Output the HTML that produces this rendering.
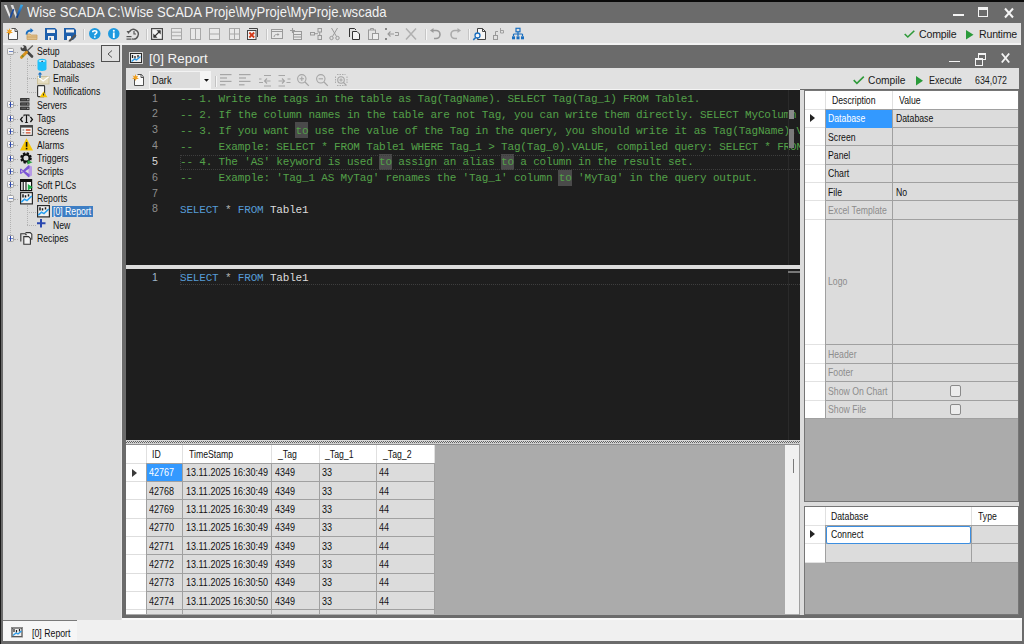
<!DOCTYPE html>
<html><head><meta charset="utf-8"><style>
*{margin:0;padding:0;box-sizing:border-box}
html,body{width:1024px;height:644px;overflow:hidden}
body{position:relative;background:#6b6b6b;font-family:"Liberation Sans",sans-serif;font-size:10px;color:#000}
.a{position:absolute}
.t{position:absolute;white-space:nowrap;line-height:1}
svg{position:absolute;overflow:visible}
.sep{position:absolute;top:29px;width:2px;height:11px;border-left:1px solid #c6c6c6;border-right:1px solid #f6f6f6}
.mono{font-family:"Liberation Mono",monospace;white-space:pre}
</style></head><body>
<div class="a" style="left:0px;top:0px;width:1024px;height:2px;background:#0a0a0a"></div>
<div class="a" style="left:0px;top:0px;width:1px;height:644px;background:#1a1a1a"></div>
<div class="a" style="left:3px;top:23px;width:1018px;height:20px;background:#e1e1e1"></div>
<div class="a" style="left:3px;top:42.5px;width:1018px;height:2px;background:#f2f2f2"></div>
<div class="a" style="left:3px;top:44.5px;width:118.5px;height:575.5px;background:#dcdcdc"></div>
<div class="a" style="left:121px;top:44.5px;width:1px;height:575.5px;background:#e6e6e6"></div>
<div class="a" style="left:126px;top:67.9px;width:893px;height:21.1px;background:#e1e1e1"></div>
<div class="a" style="left:126px;top:89px;width:674px;height:1.4px;background:#f4f4f4"></div>
<div class="a" style="left:126px;top:90px;width:674px;height:175px;background:#1e1e1e"></div>
<div class="a" style="left:126px;top:265px;width:674px;height:4px;background:#dcdcdc"></div>
<div class="a" style="left:126px;top:269px;width:674px;height:171px;background:#1e1e1e"></div>
<div class="a" style="left:126px;top:440px;width:674px;height:4px;background:#c8c8c8"></div>
<div class="a" style="left:126px;top:444px;width:674px;height:171px;background:#ababab"></div>
<div class="a" style="left:800px;top:90px;width:5px;height:525px;background:#dcdcdc"></div>
<div class="a" style="left:805px;top:91px;width:214px;height:411px;background:#ababab"></div>
<div class="a" style="left:805px;top:502px;width:214px;height:4px;background:#dcdcdc"></div>
<div class="a" style="left:805px;top:506px;width:214px;height:109px;background:#ababab"></div>
<div class="a" style="left:3px;top:620px;width:1018px;height:21.3px;background:#f0f0f0"></div>
<svg style="left:0px;top:0px" width="26" height="22" viewBox="0 0 26 22"><defs><linearGradient id="lg" x1="0" y1="1" x2="0" y2="0"><stop offset="0" stop-color="#10306e"/><stop offset="0.5" stop-color="#1e6cc0"/><stop offset="1" stop-color="#3ab0f0"/></linearGradient></defs><path d="M4 5 L6.6 5 L11.2 17.6 L9.6 18.2 Z" fill="#e6e6e6"/><path d="M10.6 5 L13.2 5 L17.6 17.6 L16 18.2 Z" fill="#dedede"/><path d="M9.4 17.6 L11 18.3 L14.4 9.6 L12.8 8.8 Z" fill="#1a4a9c"/><path d="M15.8 17.6 L17.5 18.3 L23.2 5 L20.6 4.6 Z" fill="url(#lg)"/></svg>
<div class="t" style="left:26.50px;top:5.28px;font-size:14.5px;color:#f2f2f2;transform:scaleX(0.9013);transform-origin:0 0;">Wise SCADA C:\Wise SCADA Proje\MyProje\MyProje.wscada</div>
<div class="a" style="left:952.6px;top:14px;width:11px;height:1.7px;background:#f4f4f4"></div>
<div class="a" style="left:978px;top:6.6px;width:10.2px;height:10.2px;border:1.6px solid #f4f4f4;border-top-width:3px"></div>
<svg style="left:1003.5px;top:7.5px" width="10" height="10" viewBox="0 0 10 10"><path d="M1 0.5 L9 9.5 M9 0.5 L1 9.5" stroke="#f4f4f4" stroke-width="2"/></svg>
<svg style="left:6px;top:28px" width="13" height="12" viewBox="0 0 13 12"><path d="M2.5 4.5 V11.5 H11.5 V3 L9.5 0.5 H5.5" fill="#fafafa" stroke="#505050" stroke-width="1"/><path d="M9 0.5 V3.5 H11.5" fill="none" stroke="#505050" stroke-width="1"/><path d="M3.5 0 L4.2 2.3 L6.5 1.5 L5 3.5 L7 5 L4.5 5 L3.5 7 L2.7 5 L0 5 L2 3.5 L0.5 1.5 L2.8 2.3Z" fill="#f0a020"/></svg>
<svg style="left:25px;top:28px" width="13" height="12" viewBox="0 0 13 12"><path d="M2 6 H5 L6 7 H12 V11.5 H2 Z" fill="#dfc08a" stroke="#c9a060" stroke-width="0.8"/><path d="M2 9 h10" stroke="#c9a060" stroke-width="0.8"/><path d="M1.5 6.5 C1.5 3 3.5 2.5 6 2.5" fill="none" stroke="#1a6fc0" stroke-width="1.8"/><path d="M5.5 0 L8.5 2.5 L5.5 5 Z" fill="#1a6fc0"/></svg>
<svg style="left:45px;top:28px" width="12" height="12" viewBox="0 0 12 12"><path d="M0 0 H10 L12 2 V12 H0 Z" fill="#1d5fac"/><rect x="2" y="1.5" width="8" height="3.5" fill="#f0f0f0"/><rect x="3" y="8" width="6" height="4" fill="#f0f0f0"/><rect x="4.5" y="9.5" width="1.5" height="2.5" fill="#1d5fac"/></svg>
<svg style="left:64px;top:28px" width="12" height="12" viewBox="0 0 12 12"><path d="M0 0 H10 L12 2 V9 L9 12 H0 Z" fill="#1d5fac"/><rect x="2" y="1.5" width="8" height="3" fill="#f0f0f0"/><rect x="3" y="8" width="4" height="4" fill="#f0f0f0"/><path d="M5 12 L11 6 L12.5 7.5 L6.5 13.5 L4.5 13.5Z" fill="#555"/></svg>
<div class="sep" style="left:83px"></div>
<svg style="left:88.5px;top:28px" width="11.5" height="11.5" viewBox="0 0 11.5 11.5"><circle cx="5.75" cy="5.75" r="5.75" fill="#1e9ae0"/><path d="M3.7 4.2 C3.7 2.2 7.8 2.2 7.8 4.2 C7.8 5.7 5.8 5.6 5.8 7.2" fill="none" stroke="#fff" stroke-width="1.6"/><circle cx="5.8" cy="9.1" r="0.9" fill="#fff"/></svg>
<svg style="left:107.5px;top:28px" width="11.5" height="11.5" viewBox="0 0 11.5 11.5"><circle cx="5.75" cy="5.75" r="5.75" fill="#1e9ae0"/><rect x="4.9" y="4.5" width="1.8" height="5.5" fill="#fff"/><circle cx="5.8" cy="2.8" r="1" fill="#fff"/></svg>
<svg style="left:126px;top:28px" width="13" height="12" viewBox="0 0 13 12"><path d="M3.5 3.5 A4.8 4.8 0 1 1 6 10.8" fill="none" stroke="#555" stroke-width="1.4"/><path d="M0.5 3 L4.5 3 L2.5 6 Z" fill="#555"/><path d="M8 3 V6 H10" fill="none" stroke="#555" stroke-width="1.2"/><rect x="0.5" y="8" width="5" height="1.2" fill="#555"/><rect x="0.5" y="10.5" width="5" height="1.2" fill="#555"/></svg>
<div class="sep" style="left:146px"></div>
<svg style="left:151px;top:28px" width="12" height="12" viewBox="0 0 12 12"><rect x="0.6" y="0.6" width="10.8" height="10.8" fill="#f4f4f4" stroke="#4a4a4a" stroke-width="1.2"/><path d="M3 9 L9 3" stroke="#333" stroke-width="1.1"/><path d="M5.5 2.3 H9.7 V6.5 Z" fill="#333"/><path d="M2.3 5.5 V9.7 H6.5 Z" fill="#333"/></svg>
<svg style="left:171px;top:28px" width="11" height="12" viewBox="0 0 11 12"><rect x="0.5" y="0.5" width="10" height="11" fill="#e8e8e8" stroke="#a8a8a8"/><path d="M0.5 4.2 H10.5 M0.5 7.8 H10.5" stroke="#a8a8a8"/></svg>
<svg style="left:190px;top:28px" width="11" height="12" viewBox="0 0 11 12"><rect x="0.5" y="0.5" width="10" height="11" fill="#e8e8e8" stroke="#a8a8a8"/><path d="M5.5 0.5 V11.5" stroke="#a8a8a8"/></svg>
<svg style="left:209px;top:28px" width="11" height="12" viewBox="0 0 11 12"><rect x="0.5" y="0.5" width="10" height="11" fill="#e8e8e8" stroke="#a8a8a8"/><path d="M0.5 6 H10.5" stroke="#a8a8a8"/></svg>
<svg style="left:228.5px;top:28px" width="11" height="12" viewBox="0 0 11 12"><rect x="0.5" y="0.5" width="10" height="11" fill="#e8e8e8" stroke="#a8a8a8"/><path d="M0.5 6 H10.5 M5.5 0.5 V11.5" stroke="#a8a8a8"/></svg>
<svg style="left:246.5px;top:28px" width="11" height="12" viewBox="0 0 11 12"><path d="M2 0.5 H10.5 V9" fill="none" stroke="#444" stroke-width="1"/><rect x="0.5" y="2.5" width="8.5" height="9" fill="#f4f4f4" stroke="#444" stroke-width="1"/><path d="M2.3 4.5 L7.2 9.5 M7.2 4.5 L2.3 9.5" stroke="#d23a1a" stroke-width="1.8"/></svg>
<div class="sep" style="left:266px"></div>
<svg style="left:271px;top:28px" width="12" height="12" viewBox="0 0 12 12"><rect x="0.5" y="1.5" width="11" height="9" fill="#e6e6e6" stroke="#9a9a9a"/><path d="M0.5 3.5 H11.5" stroke="#9a9a9a"/><path d="M3 9 C3 6.5 5 6.5 7 6.5" fill="none" stroke="#9a9a9a"/><path d="M6.5 5 L8.5 6.5 L6.5 8Z" fill="#9a9a9a"/></svg>
<svg style="left:290px;top:28px" width="12" height="12" viewBox="0 0 12 12"><rect x="3.5" y="3.5" width="8" height="8" fill="#e6e6e6" stroke="#9a9a9a"/><path d="M3.5 6.5 H11.5 M3.5 9 H11.5" stroke="#9a9a9a"/><path d="M2.5 0 V5 M0 2.5 H5" stroke="#9a9a9a" stroke-width="1.1"/></svg>
<svg style="left:309.5px;top:28px" width="12" height="12" viewBox="0 0 12 12"><rect x="0.5" y="4.5" width="4" height="2.5" fill="none" stroke="#9a9a9a"/><rect x="8" y="0.5" width="3.5" height="3.5" fill="none" stroke="#9a9a9a"/><rect x="8" y="7.5" width="3.5" height="4" fill="none" stroke="#9a9a9a"/><path d="M4.5 5.7 H8 M9.7 4 V7.5" stroke="#9a9a9a"/></svg>
<svg style="left:329px;top:28px" width="11" height="12" viewBox="0 0 11 12"><path d="M2.5 0 L7.5 8.5 M8.5 0 L3.5 8.5" stroke="#9a9a9a" stroke-width="1"/><circle cx="2.5" cy="10" r="1.7" fill="none" stroke="#9a9a9a"/><circle cx="8.5" cy="10" r="1.7" fill="none" stroke="#9a9a9a"/></svg>
<svg style="left:349px;top:28px" width="11" height="12" viewBox="0 0 11 12"><path d="M0.5 9 V0.5 H5.5 L7 2" fill="none" stroke="#333" stroke-width="1"/><path d="M3.5 3.5 H8 L10.5 6 V11.5 H3.5 Z" fill="#f2f2f2" stroke="#333" stroke-width="1"/></svg>
<svg style="left:368px;top:28px" width="11" height="12" viewBox="0 0 11 12"><rect x="0.5" y="2" width="7" height="9.5" fill="#e4e4e4" stroke="#9a9a9a"/><path d="M2.5 2 V0.5 H5.5 V2" fill="none" stroke="#9a9a9a"/><rect x="4.5" y="5.5" width="6" height="6" fill="#eee" stroke="#9a9a9a"/></svg>
<svg style="left:385px;top:28px" width="14" height="12" viewBox="0 0 14 12"><rect x="0" y="0" width="2" height="2" fill="#888"/><rect x="0" y="10" width="2" height="2" fill="#888"/><path d="M3 6 H9 M5.5 3.5 L3 6 L5.5 8.5" fill="none" stroke="#9a9a9a" stroke-width="1.1"/><path d="M10 4.5 H13.5 V7.5 H10" fill="none" stroke="#9a9a9a"/></svg>
<svg style="left:405px;top:28px" width="12" height="12" viewBox="0 0 12 12"><path d="M1 11.5 L11 0.5 M1 0.5 L11 11.5" stroke="#b0b0b0" stroke-width="1.5"/></svg>
<div class="sep" style="left:425px"></div>
<svg style="left:430px;top:28px" width="11" height="12" viewBox="0 0 11 12"><path d="M2 2.5 H6 A4 4 0 0 1 6 10.5 H4" fill="none" stroke="#9a9a9a" stroke-width="1.6"/><path d="M0 2.5 L3.5 0 V5Z" fill="#9a9a9a"/></svg>
<svg style="left:449.5px;top:28px" width="11" height="12" viewBox="0 0 11 12"><path d="M9 2.5 H5 A4 4 0 0 0 5 10.5 H7" fill="none" stroke="#aaa" stroke-width="1.6"/><path d="M11 2.5 L7.5 0 V5Z" fill="#aaa"/></svg>
<div class="sep" style="left:468px"></div>
<svg style="left:473px;top:28px" width="13" height="12" viewBox="0 0 13 12"><path d="M4.5 0.5 H9.5 L12.5 3.5 V11.5 H4.5 Z" fill="#f6f6f6" stroke="#444" stroke-width="1"/><path d="M9.5 0.5 V3.5 H12.5" fill="none" stroke="#444"/><circle cx="4.5" cy="7.5" r="2.5" fill="#f6f6f6" stroke="#1a6fc0" stroke-width="1.3"/><path d="M2.7 9.5 L0.3 11.8" stroke="#1a6fc0" stroke-width="1.6"/></svg>
<svg style="left:493px;top:28px" width="11" height="12" viewBox="0 0 11 12"><rect x="0.5" y="7.5" width="4" height="4" fill="none" stroke="#9a9a9a"/><path d="M2.5 7.5 V3.5 H5" fill="none" stroke="#9a9a9a"/><path d="M7.5 0 V5 H10.5 V2.5 H7.5" fill="none" stroke="#9a9a9a" stroke-width="0.9"/></svg>
<svg style="left:512px;top:28px" width="12" height="12" viewBox="0 0 12 12"><rect x="4" y="0.3" width="4" height="3.5" fill="none" stroke="#1a6fc0" stroke-width="1.2"/><path d="M6 3.8 V6 M1.5 6 H10.5 M1.5 6 V8 M6 6 V8 M10.5 6 V8" fill="none" stroke="#1a6fc0" stroke-width="1.2"/><rect x="0" y="8.3" width="3" height="3" fill="#1a6fc0"/><rect x="4.5" y="8.3" width="3" height="3" fill="#1a6fc0"/><rect x="9" y="8.3" width="3" height="3" fill="#1a6fc0"/></svg>
<svg style="left:904px;top:30px" width="11" height="8" viewBox="0 0 11 8"><path d="M0.7 4 L3.8 7 L10.3 0.7" fill="none" stroke="#2f9a3a" stroke-width="1.6"/></svg>
<div class="t ui" style="left:919px;top:29px;font-size:10.6px;letter-spacing:-0.2px;color:#1a1a1a">Compile</div>
<svg style="left:966px;top:29.5px" width="7.5" height="9.5" viewBox="0 0 7.5 9.5"><path d="M0 0 L7.5 4.75 L0 9.5Z" fill="#2a9a3a"/></svg>
<div class="t ui" style="left:979px;top:29px;font-size:10.6px;letter-spacing:-0.2px;color:#1a1a1a">Runtime</div>
<div class="a" style="left:10px;top:55.7px;width:1px;height:179.0px;border-left:1px dotted #b2b2b2"></div>
<div class="a" style="left:26.5px;top:57.7px;width:1px;height:34.1px;border-left:1px dotted #b2b2b2"></div>
<div class="a" style="left:26.5px;top:204.7px;width:1px;height:20.7px;border-left:1px dotted #b2b2b2"></div>
<div class="a" style="left:14px;top:51.7px;width:4px;height:1px;border-top:1px dotted #b2b2b2"></div>
<div class="a" style="left:7px;top:47.5px;width:7px;height:7.5px;border:1px solid #a4a4a4;background:linear-gradient(#fdfdfd,#e8e8e8);border-radius:1.5px"></div>
<div class="a" style="left:8.5px;top:51px;width:4px;height:1px;background:#6f86c8"></div>
<svg style="left:19.5px;top:44.9px" width="14" height="13" viewBox="0 0 14 13"><path d="M5 4.5 L12 11.5" stroke="#454545" stroke-width="2.6" stroke-linecap="round"/><circle cx="3.6" cy="3.2" r="3" fill="#454545"/><path d="M0.3 1.2 L2.6 3.5 L4.2 1.9 L1.9 -0.4Z" fill="#dcdcdc"/><path d="M6.8 6.2 L12.8 0.6" stroke="#585858" stroke-width="1.3"/><path d="M1.5 12.3 L6.5 7.3" stroke="#d8921e" stroke-width="3" stroke-linecap="round"/><path d="M2 11.8 L3.3 10.5" stroke="#7a8a30" stroke-width="2.2"/></svg>
<div class="t" style="left:36.50px;top:47.10px;font-size:10px;color:#111;transform:scaleX(0.8680);transform-origin:0 0;">Setup</div>
<div class="a" style="left:27px;top:65.1px;width:9px;height:1px;border-top:1px dotted #b2b2b2"></div>
<svg style="left:36.5px;top:58.5px" width="13" height="13" viewBox="0 0 13 13"><path d="M0.5 1.8 C0.5 -0.9 9.5 -0.9 9.5 1.8 V10 C9.5 12.6 0.5 12.6 0.5 10 Z" fill="#1ec0fa"/><ellipse cx="5" cy="1.9" rx="3.4" ry="1" fill="#c8f0ff"/><ellipse cx="5.2" cy="2.3" rx="1" ry="0.5" fill="#0a3050"/></svg>
<div class="t" style="left:52.80px;top:60.46px;font-size:10px;color:#111;transform:scaleX(0.8680);transform-origin:0 0;">Databases</div>
<div class="a" style="left:27px;top:78.4px;width:9px;height:1px;border-top:1px dotted #b2b2b2"></div>
<svg style="left:36.5px;top:71.8px" width="13" height="13" viewBox="0 0 13 13"><rect x="0.5" y="4.5" width="11.5" height="7.5" fill="#e4dcc0" stroke="#c8bc90" stroke-width="0.8"/><path d="M0.8 4.8 L6.2 9 L11.7 4.8" fill="none" stroke="#fff" stroke-width="1.2"/><path d="M3 6 V1.5" stroke="#1a70c0" stroke-width="1.3"/><path d="M0.8 2.5 L3 0 L5.2 2.5Z" fill="#1a70c0"/></svg>
<div class="t" style="left:52.80px;top:73.82px;font-size:10px;color:#111;transform:scaleX(0.8680);transform-origin:0 0;">Emails</div>
<div class="a" style="left:27px;top:91.8px;width:9px;height:1px;border-top:1px dotted #b2b2b2"></div>
<svg style="left:36.5px;top:85.2px" width="13" height="13" viewBox="0 0 13 13"><rect x="0.6" y="0.6" width="7" height="11" rx="0.8" fill="#f4f4f4" stroke="#333" stroke-width="1.1"/><path d="M6.5 6.5 L10.5 12.3 H2.5 Z" fill="#f5c400"/><rect x="6.1" y="8.5" width="0.9" height="2" fill="#222"/></svg>
<div class="t" style="left:52.80px;top:87.18px;font-size:10px;color:#111;transform:scaleX(0.8680);transform-origin:0 0;">Notifications</div>
<div class="a" style="left:14px;top:105.1px;width:4px;height:1px;border-top:1px dotted #b2b2b2"></div>
<div class="a" style="left:7px;top:100.5px;width:7px;height:7.5px;border:1px solid #a4a4a4;background:linear-gradient(#fdfdfd,#e8e8e8);border-radius:1.5px"></div>
<div class="a" style="left:8.5px;top:104px;width:4px;height:1px;background:#6f86c8"></div>
<div class="a" style="left:10px;top:102px;width:1px;height:5px;background:#2c44a8"></div>
<svg style="left:20px;top:98.3px" width="14" height="13" viewBox="0 0 14 13"><rect x="0" y="0" width="9.5" height="3.4" rx="0.5" fill="#383838"/><rect x="0" y="4.3" width="9.5" height="3.4" rx="0.5" fill="#383838"/><rect x="0" y="8.6" width="9.5" height="3.4" rx="0.5" fill="#383838"/><path d="M1.3 1.7 H6 M1.3 6 H6 M1.3 10.3 H6" stroke="#6a6a6a" stroke-width="0.8"/><circle cx="7.9" cy="1.7" r="0.6" fill="#eee"/><circle cx="7.9" cy="6" r="0.6" fill="#eee"/><circle cx="7.9" cy="10.3" r="0.6" fill="#eee"/></svg>
<div class="t" style="left:36.50px;top:100.54px;font-size:10px;color:#111;transform:scaleX(0.8680);transform-origin:0 0;">Servers</div>
<div class="a" style="left:14px;top:118.5px;width:4px;height:1px;border-top:1px dotted #b2b2b2"></div>
<div class="a" style="left:7px;top:114.5px;width:7px;height:7.5px;border:1px solid #a4a4a4;background:linear-gradient(#fdfdfd,#e8e8e8);border-radius:1.5px"></div>
<div class="a" style="left:8.5px;top:118px;width:4px;height:1px;background:#6f86c8"></div>
<div class="a" style="left:10px;top:116px;width:1px;height:5px;background:#2c44a8"></div>
<svg style="left:19.5px;top:114.0px" width="14" height="13" viewBox="0 0 14 13"><path d="M2.6 2.8 L0.6 5.4 L2.6 8" fill="none" stroke="#111" stroke-width="1.3"/><path d="M10.4 2.8 L12.4 5.4 L10.4 8" fill="none" stroke="#111" stroke-width="1.3"/><path d="M3.6 0.4 H9.4 L9.6 2.4 H9 L8.4 1.4 H7.1 V8.1 L8.1 8.6 V9 H4.9 V8.6 L5.9 8.1 V1.4 H4.6 L4 2.4 H3.4 Z" fill="#111"/></svg>
<div class="t" style="left:36.50px;top:113.90px;font-size:10px;color:#111;transform:scaleX(0.8680);transform-origin:0 0;">Tags</div>
<div class="a" style="left:14px;top:131.9px;width:4px;height:1px;border-top:1px dotted #b2b2b2"></div>
<div class="a" style="left:7px;top:127.5px;width:7px;height:7.5px;border:1px solid #a4a4a4;background:linear-gradient(#fdfdfd,#e8e8e8);border-radius:1.5px"></div>
<div class="a" style="left:8.5px;top:131px;width:4px;height:1px;background:#6f86c8"></div>
<div class="a" style="left:10px;top:129px;width:1px;height:5px;background:#2c44a8"></div>
<svg style="left:19.5px;top:125.1px" width="14" height="13" viewBox="0 0 14 13"><rect x="0.6" y="0.6" width="11.8" height="9.8" fill="#f6f6f6" stroke="#444" stroke-width="1.1"/><rect x="0.6" y="0.6" width="11.8" height="2" fill="#444"/><path d="M2.5 5 H4.3 M2.5 7.8 H4.3" stroke="#666" stroke-width="1"/><path d="M5.8 5 H10.5 M5.8 7.8 H10.5" stroke="#d04a28" stroke-width="1.3"/></svg>
<div class="t" style="left:36.50px;top:127.26px;font-size:10px;color:#111;transform:scaleX(0.8680);transform-origin:0 0;">Screens</div>
<div class="a" style="left:14px;top:145.2px;width:4px;height:1px;border-top:1px dotted #b2b2b2"></div>
<div class="a" style="left:7px;top:140.5px;width:7px;height:7.5px;border:1px solid #a4a4a4;background:linear-gradient(#fdfdfd,#e8e8e8);border-radius:1.5px"></div>
<div class="a" style="left:8.5px;top:144px;width:4px;height:1px;background:#6f86c8"></div>
<div class="a" style="left:10px;top:142px;width:1px;height:5px;background:#2c44a8"></div>
<svg style="left:19.5px;top:138.4px" width="14" height="13" viewBox="0 0 14 13"><path d="M6.5 0.3 L13 12.5 H0 Z" fill="#f7c600"/><rect x="5.8" y="4" width="1.6" height="4.8" fill="#111"/><rect x="5.8" y="9.8" width="1.6" height="1.6" fill="#111"/></svg>
<div class="t" style="left:36.50px;top:140.62px;font-size:10px;color:#111;transform:scaleX(0.8680);transform-origin:0 0;">Alarms</div>
<div class="a" style="left:14px;top:158.6px;width:4px;height:1px;border-top:1px dotted #b2b2b2"></div>
<div class="a" style="left:7px;top:154.5px;width:7px;height:7.5px;border:1px solid #a4a4a4;background:linear-gradient(#fdfdfd,#e8e8e8);border-radius:1.5px"></div>
<div class="a" style="left:8.5px;top:158px;width:4px;height:1px;background:#6f86c8"></div>
<div class="a" style="left:10px;top:156px;width:1px;height:5px;background:#2c44a8"></div>
<svg style="left:19.5px;top:151.8px" width="14" height="13" viewBox="0 0 14 13"><circle cx="6" cy="6" r="4.3" fill="none" stroke="#111" stroke-width="3" stroke-dasharray="2 1.4"/><circle cx="6" cy="6" r="3.6" fill="none" stroke="#111" stroke-width="2"/><path d="M7.5 8 L12.5 10.3 L7.5 12.6Z" fill="#2aa040"/></svg>
<div class="t" style="left:36.50px;top:153.98px;font-size:10px;color:#111;transform:scaleX(0.8680);transform-origin:0 0;">Triggers</div>
<div class="a" style="left:14px;top:171.9px;width:4px;height:1px;border-top:1px dotted #b2b2b2"></div>
<div class="a" style="left:7px;top:167.5px;width:7px;height:7.5px;border:1px solid #a4a4a4;background:linear-gradient(#fdfdfd,#e8e8e8);border-radius:1.5px"></div>
<div class="a" style="left:8.5px;top:171px;width:4px;height:1px;background:#6f86c8"></div>
<div class="a" style="left:10px;top:169px;width:1px;height:5px;background:#2c44a8"></div>
<svg style="left:19.5px;top:165.1px" width="14" height="13" viewBox="0 0 14 13"><path d="M8.5 0 L12 1.6 V10.6 L8.5 12.3 Z" fill="#b89be6"/><path d="M8.5 0.2 L3.2 5.2 L1 3.4 L0 4 V8.4 L1 9 L3.2 7.2 L8.5 12.2 L9.5 11.5 V9.2 L5.2 6.2 L9.5 3.2 V1 Z" fill="#7b55d6"/><path d="M1.3 4.9 L2.8 6.2 L1.3 7.5Z" fill="#dcdcdc"/></svg>
<div class="t" style="left:36.50px;top:167.34px;font-size:10px;color:#111;transform:scaleX(0.8680);transform-origin:0 0;">Scripts</div>
<div class="a" style="left:14px;top:185.3px;width:4px;height:1px;border-top:1px dotted #b2b2b2"></div>
<div class="a" style="left:7px;top:180.5px;width:7px;height:7.5px;border:1px solid #a4a4a4;background:linear-gradient(#fdfdfd,#e8e8e8);border-radius:1.5px"></div>
<div class="a" style="left:8.5px;top:184px;width:4px;height:1px;background:#6f86c8"></div>
<div class="a" style="left:10px;top:182px;width:1px;height:5px;background:#2c44a8"></div>
<svg style="left:19.5px;top:178.5px" width="14" height="13" viewBox="0 0 14 13"><rect x="0.6" y="0.6" width="11" height="11" fill="#fafafa" stroke="#111" stroke-width="1.2"/><rect x="0.6" y="0.6" width="11" height="2.4" fill="#111"/><path d="M3.2 3 V11.6 M6 3 V11.6" stroke="#111" stroke-width="1.1"/><path d="M7.8 5 L12.8 8.3 L7.8 11.6 Z" fill="#22b04a"/></svg>
<div class="t" style="left:36.50px;top:180.70px;font-size:10px;color:#111;transform:scaleX(0.8680);transform-origin:0 0;">Soft PLCs</div>
<div class="a" style="left:14px;top:198.7px;width:4px;height:1px;border-top:1px dotted #b2b2b2"></div>
<div class="a" style="left:7px;top:194.5px;width:7px;height:7.5px;border:1px solid #a4a4a4;background:linear-gradient(#fdfdfd,#e8e8e8);border-radius:1.5px"></div>
<div class="a" style="left:8.5px;top:198px;width:4px;height:1px;background:#6f86c8"></div>
<svg style="left:19.5px;top:191.9px" width="14" height="13" viewBox="0 0 14 13"><rect x="0.6" y="0.6" width="11.8" height="11.3" fill="#f2f2f2" stroke="#2a2a2a" stroke-width="1.2"/><path d="M3 2.2 V5.5 M5.5 3.2 V5.5 M8.5 2.2 V4.5" stroke="#1a1a1a" stroke-width="1.5"/><path d="M1.3 10.2 L4.5 7.2 L7 8.6 L11.8 4" fill="none" stroke="#2aa0f0" stroke-width="1.6"/></svg>
<div class="t" style="left:36.50px;top:194.06px;font-size:10px;color:#111;transform:scaleX(0.8680);transform-origin:0 0;">Reports</div>
<div class="a" style="left:27px;top:212.0px;width:9px;height:1px;border-top:1px dotted #b2b2b2"></div>
<svg style="left:36.5px;top:205.4px" width="13" height="13" viewBox="0 0 13 13"><rect x="0.6" y="0.6" width="11.8" height="11.3" fill="#f2f2f2" stroke="#2a2a2a" stroke-width="1.2"/><path d="M3 2.2 V5.5 M5.5 3.2 V5.5 M8.5 2.2 V4.5" stroke="#1a1a1a" stroke-width="1.5"/><path d="M1.3 10.2 L4.5 7.2 L7 8.6 L11.8 4" fill="none" stroke="#2aa0f0" stroke-width="1.6"/></svg>
<div class="a" style="left:51.8px;top:206.42px;width:41px;height:10.8px;background:#3d7ec4"></div>
<div class="t" style="left:53.00px;top:207.42px;font-size:10px;color:#fff;transform:scaleX(0.8680);transform-origin:0 0;">[0] Report</div>
<div class="a" style="left:27px;top:225.4px;width:9px;height:1px;border-top:1px dotted #b2b2b2"></div>
<svg style="left:36.5px;top:218.8px" width="13" height="13" viewBox="0 0 13 13"><path d="M4 0 V8.5 M0 4.25 H8.5" stroke="#2a48b0" stroke-width="2"/></svg>
<div class="t" style="left:52.80px;top:220.78px;font-size:10px;color:#111;transform:scaleX(0.8680);transform-origin:0 0;">New</div>
<div class="a" style="left:14px;top:238.7px;width:4px;height:1px;border-top:1px dotted #b2b2b2"></div>
<div class="a" style="left:7px;top:234.5px;width:7px;height:7.5px;border:1px solid #a4a4a4;background:linear-gradient(#fdfdfd,#e8e8e8);border-radius:1.5px"></div>
<div class="a" style="left:8.5px;top:238px;width:4px;height:1px;background:#6f86c8"></div>
<div class="a" style="left:10px;top:236px;width:1px;height:5px;background:#2c44a8"></div>
<svg style="left:19.5px;top:231.9px" width="14" height="13" viewBox="0 0 14 13"><path d="M5.5 0.6 H10.2 L11.8 2.2 V7.8" fill="#f4f4f4" stroke="#333" stroke-width="1.1"/><path d="M0.8 9.5 V1.8 H5.2 L6.5 3" fill="none" stroke="#333" stroke-width="1.1"/><path d="M3.8 4.6 H8.6 L10.4 6.4 V12.2 H3.8 Z" fill="#f2f2f2" stroke="#333" stroke-width="1.1"/></svg>
<div class="t" style="left:36.50px;top:234.14px;font-size:10px;color:#111;transform:scaleX(0.8680);transform-origin:0 0;">Recipes</div>
<div class="a" style="left:101px;top:45px;width:18.5px;height:16.5px;border:1px solid #505050;background:#e0e0e0"></div>
<svg style="left:106.5px;top:49.5px" width="6" height="8" viewBox="0 0 6 8"><path d="M5 0.5 L1 4 L5 7.5" fill="none" stroke="#555" stroke-width="1"/></svg>
<svg style="left:129px;top:52px" width="14" height="12" viewBox="0 0 14 12"><rect x="0.5" y="0.5" width="13" height="11" fill="#2a2a2a" stroke="#d8d8d8" stroke-width="1"/><rect x="2" y="2" width="10" height="8" fill="#f0f0f0"/><path d="M3.5 3 V6 M6 4 V6.5 M9 3 V5.5" stroke="#222" stroke-width="1.3"/><path d="M2.5 9.5 L5.5 7 L7.5 8 L11.5 4.5" fill="none" stroke="#2a9ae8" stroke-width="1.4"/></svg>
<div class="t" style="left:149.20px;top:51.95px;font-size:13.7px;color:#f4f4f4;transform:scaleX(0.9774);transform-origin:0 0;">[0] Report</div>
<div class="a" style="left:949px;top:60.5px;width:11px;height:1.8px;background:#f4f4f4"></div>
<div class="a" style="left:978px;top:52.6px;width:7.6px;height:7.8px;border:1.3px solid #f4f4f4;border-top-width:2.4px"></div>
<div class="a" style="left:975.3px;top:57.5px;width:7.8px;height:8.2px;border:1.3px solid #f4f4f4;border-top-width:2.4px;background:#6b6b6b"></div>
<svg style="left:1001px;top:53px" width="9" height="10" viewBox="0 0 9 10"><path d="M0.8 0.5 L8.2 9.5 M8.2 0.5 L0.8 9.5" stroke="#f4f4f4" stroke-width="1.9"/></svg>
<svg style="left:132px;top:74px" width="12" height="12" viewBox="0 0 12 12"><path d="M2.5 4.5 V11.5 H11.5 V3 L9.5 0.5 H5.5" fill="#fafafa" stroke="#505050" stroke-width="1"/><path d="M9 0.5 V3.5 H11.5" fill="none" stroke="#505050" stroke-width="1"/><path d="M3.5 0 L4.2 2.3 L6.5 1.5 L5 3.5 L7 5 L4.5 5 L3.5 7 L2.7 5 L0 5 L2 3.5 L0.5 1.5 L2.8 2.3Z" fill="#f0a020"/></svg>
<div class="a" style="left:149px;top:71px;width:62px;height:18px;background:#dcdcdc;border:1px solid #f2f2f2"></div>
<div class="a" style="left:199.5px;top:71px;width:11.5px;height:18px;background:#f4f4f4"></div>
<svg style="left:203.5px;top:79px" width="5" height="3" viewBox="0 0 5 3"><path d="M0 0 H5 L2.5 2.8Z" fill="#111"/></svg>
<div class="t" style="left:152.30px;top:75.70px;font-size:10px;color:#111;transform:scaleX(0.9283);transform-origin:0 0;">Dark</div>
<div class="a" style="left:215px;top:76px;width:2px;height:10.5px;border-left:1px solid #c2c2c2;border-right:1px solid #f6f6f6"></div>
<svg style="left:220.3px;top:74.3px" width="12" height="12" viewBox="0 0 12 12"><rect x="0" y="0.0" width="11.5" height="1.2" fill="#a6a6a6"/><rect x="0" y="3.4" width="7" height="1.2" fill="#a6a6a6"/><rect x="0" y="6.8" width="11.5" height="1.2" fill="#a6a6a6"/><rect x="0" y="10.2" width="5.5" height="1.2" fill="#a6a6a6"/></svg>
<svg style="left:239.3px;top:74.3px" width="12" height="12" viewBox="0 0 12 12"><rect x="0" y="0.0" width="11.5" height="1.2" fill="#a6a6a6"/><rect x="0" y="3.4" width="7" height="1.2" fill="#a6a6a6"/><rect x="0" y="6.8" width="11.5" height="1.2" fill="#a6a6a6"/><rect x="0" y="10.2" width="5.5" height="1.2" fill="#a6a6a6"/></svg>
<svg style="left:258.5px;top:74.5px" width="12.5" height="12" viewBox="0 0 12.5 12"><path d="M5 0.5 H12 M0 4 H2.5 M0 7.5 H4 M5 11 H12" stroke="#a6a6a6" stroke-width="1.1"/><path d="M11.5 6 H5.5 M8 3.5 L5.5 6 L8 8.5" fill="none" stroke="#a6a6a6" stroke-width="1.1"/></svg>
<svg style="left:277.5px;top:74.5px" width="12.5" height="12" viewBox="0 0 12.5 12"><path d="M0.5 0.5 H7 M9.5 4 H12.5 M8.5 7.5 H12.5 M0.5 11 H7" stroke="#a6a6a6" stroke-width="1.1"/><path d="M0.5 6 H6.5 M4 3.5 L6.5 6 L4 8.5" fill="none" stroke="#a6a6a6" stroke-width="1.1"/></svg>
<svg style="left:297px;top:74px" width="12" height="12" viewBox="0 0 12 12"><circle cx="4.8" cy="4.8" r="4.2" fill="none" stroke="#a6a6a6" stroke-width="1.1"/><path d="M8 8 L11.8 11.8" stroke="#a6a6a6" stroke-width="1.2"/><path d="M2.6 4.8 H7 M4.8 2.6 V7" stroke="#a6a6a6" stroke-width="1.1"/></svg>
<svg style="left:316px;top:74px" width="12" height="12" viewBox="0 0 12 12"><circle cx="4.8" cy="4.8" r="4.2" fill="none" stroke="#a6a6a6" stroke-width="1.1"/><path d="M8 8 L11.8 11.8" stroke="#a6a6a6" stroke-width="1.2"/><path d="M2.6 4.8 H7" stroke="#a6a6a6" stroke-width="1.1"/></svg>
<svg style="left:335px;top:74px" width="12.5" height="12" viewBox="0 0 12.5 12"><path d="M2 0.5 H10.5 M0.5 2.5 V10 M12 2.5 V10 M2 11.5 H10.5" stroke="#a6a6a6" stroke-width="0.9" stroke-dasharray="1.5 1"/><circle cx="6" cy="6" r="3.3" fill="none" stroke="#a6a6a6" stroke-width="1.1"/><path d="M4.3 6 H7.7 M6 4.3 V7.7" stroke="#a6a6a6" stroke-width="1"/><path d="M8.5 8.5 L11.5 11.5" stroke="#a6a6a6" stroke-width="1.1"/></svg>
<svg style="left:853px;top:76.3px" width="11.5" height="8.3" viewBox="0 0 11.5 8.3"><path d="M0.7 4.2 L3.9 7.3 L10.8 0.7" fill="none" stroke="#2f9a3a" stroke-width="1.6"/></svg>
<div class="t" style="left:868.00px;top:75.66px;font-size:10.4px;color:#1a1a1a;transform:scaleX(0.9830);transform-origin:0 0;">Compile</div>
<svg style="left:915.5px;top:75.5px" width="7" height="9.5" viewBox="0 0 7 9.5"><path d="M0 0 L7 4.75 L0 9.5Z" fill="#2a9a3a"/></svg>
<div class="t" style="left:928.50px;top:75.66px;font-size:10.4px;color:#1a1a1a;transform:scaleX(0.8728);transform-origin:0 0;">Execute</div>
<div class="t" style="left:975.00px;top:75.66px;font-size:10.4px;color:#1a1a1a;transform:scaleX(0.8512);transform-origin:0 0;">634,072</div>
<div class="a" style="left:295.06px;top:122.36px;width:13.34px;height:16.1px;background:#4a4a4a"></div>
<div class="a" style="left:378.52px;top:154.02px;width:13.34px;height:16.1px;background:#4a4a4a"></div>
<div class="a" style="left:500.5px;top:154.02px;width:13.34px;height:16.1px;background:#4a4a4a"></div>
<div class="a" style="left:558.28px;top:169.85000000000002px;width:13.34px;height:16.1px;background:#4a4a4a"></div>
<div class="a" style="left:179.8px;top:154.92px;width:620.2px;height:14.8px;border:1px dotted #3e3e3e;border-right:none"></div>
<div class="t" style="left:151.50px;top:93.66px;font-size:10.4px;color:#8f8f8f;transform:scaleX(1.0200);transform-origin:0 0;">1</div>
<div class="t mono" style="left:180px;top:94.06px;font-size:11.0px;letter-spacing:-0.180px;width:620px;overflow:hidden"><span style="color:#54a149">-- 1. Write the tags in the table as Tag(TagName). SELECT Tag(Tag_1) FROM Table1.</span></div>
<div class="t" style="left:151.50px;top:109.49px;font-size:10.4px;color:#8f8f8f;transform:scaleX(1.0200);transform-origin:0 0;">2</div>
<div class="t mono" style="left:180px;top:109.89px;font-size:11.0px;letter-spacing:-0.180px;width:620px;overflow:hidden"><span style="color:#54a149">-- 2. If the column names in the table are not Tag, you can write them directly. SELECT MyColumn FROM Table1</span></div>
<div class="t" style="left:151.50px;top:125.32px;font-size:10.4px;color:#8f8f8f;transform:scaleX(1.0200);transform-origin:0 0;">3</div>
<div class="t mono" style="left:180px;top:125.72px;font-size:11.0px;letter-spacing:-0.180px;width:620px;overflow:hidden"><span style="color:#54a149">-- 3. If you want to use the value of the Tag in the query, you should write it as Tag(TagName).VALUE</span></div>
<div class="t" style="left:151.50px;top:141.15px;font-size:10.4px;color:#8f8f8f;transform:scaleX(1.0200);transform-origin:0 0;">4</div>
<div class="t mono" style="left:180px;top:141.55px;font-size:11.0px;letter-spacing:-0.180px;width:620px;overflow:hidden"><span style="color:#54a149">--    Example: SELECT * FROM Table1 WHERE Tag_1 &gt; Tag(Tag_0).VALUE, compiled query: SELECT * FROM Table1 WHERE Tag_1 &gt; 5</span></div>
<div class="t" style="left:151.50px;top:156.98px;font-size:10.4px;color:#dadada;transform:scaleX(1.0200);transform-origin:0 0;">5</div>
<div class="t mono" style="left:180px;top:157.38px;font-size:11.0px;letter-spacing:-0.180px;width:620px;overflow:hidden"><span style="color:#54a149">-- 4. The &#x27;AS&#x27; keyword is used to assign an alias to a column in the result set.</span></div>
<div class="t" style="left:151.50px;top:172.81px;font-size:10.4px;color:#8f8f8f;transform:scaleX(1.0200);transform-origin:0 0;">6</div>
<div class="t mono" style="left:180px;top:173.21px;font-size:11.0px;letter-spacing:-0.180px;width:620px;overflow:hidden"><span style="color:#54a149">--    Example: &#x27;Tag_1 AS MyTag&#x27; renames the &#x27;Tag_1&#x27; column to &#x27;MyTag&#x27; in the query output.</span></div>
<div class="t" style="left:151.50px;top:188.64px;font-size:10.4px;color:#8f8f8f;transform:scaleX(1.0200);transform-origin:0 0;">7</div>
<div class="t" style="left:151.50px;top:204.47px;font-size:10.4px;color:#8f8f8f;transform:scaleX(1.0200);transform-origin:0 0;">8</div>
<div class="t mono" style="left:180px;top:204.87px;font-size:11.0px;letter-spacing:-0.180px;width:620px;overflow:hidden"><span style="color:#569cd6">SELECT</span><span style="color:#b4b4b4"> * </span><span style="color:#569cd6">FROM</span><span style="color:#dcdcdc"> Table1</span></div>
<div class="a" style="left:788px;top:90px;width:1px;height:175px;background:#2a2a2a"></div>
<div class="a" style="left:789px;top:110px;width:5px;height:9px;background:#8a8a8a"></div>
<div class="a" style="left:789px;top:129px;width:5px;height:19px;background:#7a7a7a"></div>
<div class="a" style="left:179.8px;top:269.5px;width:620.2px;height:15.5px;border-bottom:1px dotted #3e3e3e;border-left:1px dotted #3e3e3e"></div>
<div class="t" style="left:151.50px;top:272.66px;font-size:10.4px;color:#9fb6c8;transform:scaleX(1.0200);transform-origin:0 0;">1</div>
<div class="t mono" style="left:180px;top:273.06px;font-size:11.0px;letter-spacing:-0.180px;width:620px;overflow:hidden"><span style="color:#569cd6">SELECT</span><span style="color:#b4b4b4"> * </span><span style="color:#569cd6">FROM</span><span style="color:#dcdcdc"> Table1</span></div>
<div class="a" style="left:788px;top:269px;width:1px;height:171px;background:#2a2a2a"></div>
<div class="a" style="left:788px;top:271px;width:12px;height:1.5px;background:#777"></div>
<div class="a" style="left:126px;top:440px;width:674px;height:1.2px;background:#d6d6d6"></div>
<div class="a" style="left:126px;top:441.2px;width:674px;height:2px;background:repeating-conic-gradient(#606060 0 25%,#d8d8d8 0 50%) 0 0/2px 2px"></div>
<div class="a" style="left:126px;top:443.2px;width:674px;height:0.6px;background:#d0d0d0"></div>
<div class="a" style="left:126px;top:443.8px;width:674px;height:1.4px;background:#8c8c8c"></div>
<div class="a" style="left:126px;top:445.2px;width:308.8px;height:18.1px;background:#fff"></div>
<div class="a" style="left:146.5px;top:463.3px;width:288.3px;height:151.2px;background:#dcdcdc"></div>
<div class="a" style="left:126px;top:463.3px;width:20.5px;height:151.2px;background:#fff"></div>
<div class="a" style="left:146.5px;top:462.8px;width:288.3px;height:1px;background:#a0a0a0"></div>
<div class="a" style="left:126px;top:462.8px;width:20.5px;height:1px;background:#dedede"></div>
<div class="a" style="left:146.5px;top:481.1px;width:288.3px;height:1px;background:#a0a0a0"></div>
<div class="a" style="left:126px;top:481.1px;width:20.5px;height:1px;background:#dedede"></div>
<div class="a" style="left:146.5px;top:499.40000000000003px;width:288.3px;height:1px;background:#a0a0a0"></div>
<div class="a" style="left:126px;top:499.40000000000003px;width:20.5px;height:1px;background:#dedede"></div>
<div class="a" style="left:146.5px;top:517.7px;width:288.3px;height:1px;background:#a0a0a0"></div>
<div class="a" style="left:126px;top:517.7px;width:20.5px;height:1px;background:#dedede"></div>
<div class="a" style="left:146.5px;top:536.0px;width:288.3px;height:1px;background:#a0a0a0"></div>
<div class="a" style="left:126px;top:536.0px;width:20.5px;height:1px;background:#dedede"></div>
<div class="a" style="left:146.5px;top:554.3px;width:288.3px;height:1px;background:#a0a0a0"></div>
<div class="a" style="left:126px;top:554.3px;width:20.5px;height:1px;background:#dedede"></div>
<div class="a" style="left:146.5px;top:572.6px;width:288.3px;height:1px;background:#a0a0a0"></div>
<div class="a" style="left:126px;top:572.6px;width:20.5px;height:1px;background:#dedede"></div>
<div class="a" style="left:146.5px;top:590.9px;width:288.3px;height:1px;background:#a0a0a0"></div>
<div class="a" style="left:126px;top:590.9px;width:20.5px;height:1px;background:#dedede"></div>
<div class="a" style="left:146.5px;top:609.2px;width:288.3px;height:1px;background:#a0a0a0"></div>
<div class="a" style="left:126px;top:609.2px;width:20.5px;height:1px;background:#dedede"></div>
<div class="a" style="left:146.0px;top:445.2px;width:1px;height:18.1px;background:#e0e0e0"></div>
<div class="a" style="left:146.0px;top:463.3px;width:1px;height:151.2px;background:#a0a0a0"></div>
<div class="a" style="left:181.8px;top:445.2px;width:1px;height:18.1px;background:#e0e0e0"></div>
<div class="a" style="left:181.8px;top:463.3px;width:1px;height:151.2px;background:#a0a0a0"></div>
<div class="a" style="left:270.8px;top:445.2px;width:1px;height:18.1px;background:#e0e0e0"></div>
<div class="a" style="left:270.8px;top:463.3px;width:1px;height:151.2px;background:#a0a0a0"></div>
<div class="a" style="left:318.8px;top:445.2px;width:1px;height:18.1px;background:#e0e0e0"></div>
<div class="a" style="left:318.8px;top:463.3px;width:1px;height:151.2px;background:#a0a0a0"></div>
<div class="a" style="left:376.2px;top:445.2px;width:1px;height:18.1px;background:#e0e0e0"></div>
<div class="a" style="left:376.2px;top:463.3px;width:1px;height:151.2px;background:#a0a0a0"></div>
<div class="a" style="left:434.3px;top:445.2px;width:1px;height:18.1px;background:#e0e0e0"></div>
<div class="a" style="left:434.3px;top:463.3px;width:1px;height:151.2px;background:#a0a0a0"></div>
<div class="t" style="left:152.30px;top:450.00px;font-size:10.3px;color:#111;transform:scaleX(0.8450);transform-origin:0 0;">ID</div>
<div class="t" style="left:188.50px;top:450.00px;font-size:10.3px;color:#111;transform:scaleX(0.8450);transform-origin:0 0;">TimeStamp</div>
<div class="t" style="left:278.30px;top:450.00px;font-size:10.3px;color:#111;transform:scaleX(0.8450);transform-origin:0 0;">_Tag</div>
<div class="t" style="left:325.20px;top:450.00px;font-size:10.3px;color:#111;transform:scaleX(0.8450);transform-origin:0 0;">_Tag_1</div>
<div class="t" style="left:382.60px;top:450.00px;font-size:10.3px;color:#111;transform:scaleX(0.8450);transform-origin:0 0;">_Tag_2</div>
<div class="a" style="left:147px;top:463.8px;width:35px;height:17.3px;background:#3399ff"></div>
<svg style="left:132px;top:468.5px" width="5" height="8" viewBox="0 0 5 8"><path d="M0 0 L5 4 L0 8Z" fill="#3a3a3a"/></svg>
<div class="t" style="left:149.40px;top:468.39px;font-size:10.3px;color:#fff;transform:scaleX(0.8750);transform-origin:0 0;">42767</div>
<div class="t" style="left:185.90px;top:468.39px;font-size:10.3px;color:#111;transform:scaleX(0.8750);transform-origin:0 0;">13.11.2025 16:30:49</div>
<div class="t" style="left:274.80px;top:468.39px;font-size:10.3px;color:#111;transform:scaleX(0.8750);transform-origin:0 0;">4349</div>
<div class="t" style="left:321.70px;top:468.39px;font-size:10.3px;color:#111;transform:scaleX(0.8750);transform-origin:0 0;">33</div>
<div class="t" style="left:379.00px;top:468.39px;font-size:10.3px;color:#111;transform:scaleX(0.8750);transform-origin:0 0;">44</div>
<div class="t" style="left:149.40px;top:486.69px;font-size:10.3px;color:#111;transform:scaleX(0.8750);transform-origin:0 0;">42768</div>
<div class="t" style="left:185.90px;top:486.69px;font-size:10.3px;color:#111;transform:scaleX(0.8750);transform-origin:0 0;">13.11.2025 16:30:49</div>
<div class="t" style="left:274.80px;top:486.69px;font-size:10.3px;color:#111;transform:scaleX(0.8750);transform-origin:0 0;">4349</div>
<div class="t" style="left:321.70px;top:486.69px;font-size:10.3px;color:#111;transform:scaleX(0.8750);transform-origin:0 0;">33</div>
<div class="t" style="left:379.00px;top:486.69px;font-size:10.3px;color:#111;transform:scaleX(0.8750);transform-origin:0 0;">44</div>
<div class="t" style="left:149.40px;top:505.00px;font-size:10.3px;color:#111;transform:scaleX(0.8750);transform-origin:0 0;">42769</div>
<div class="t" style="left:185.90px;top:505.00px;font-size:10.3px;color:#111;transform:scaleX(0.8750);transform-origin:0 0;">13.11.2025 16:30:49</div>
<div class="t" style="left:274.80px;top:505.00px;font-size:10.3px;color:#111;transform:scaleX(0.8750);transform-origin:0 0;">4349</div>
<div class="t" style="left:321.70px;top:505.00px;font-size:10.3px;color:#111;transform:scaleX(0.8750);transform-origin:0 0;">33</div>
<div class="t" style="left:379.00px;top:505.00px;font-size:10.3px;color:#111;transform:scaleX(0.8750);transform-origin:0 0;">44</div>
<div class="t" style="left:149.40px;top:523.30px;font-size:10.3px;color:#111;transform:scaleX(0.8750);transform-origin:0 0;">42770</div>
<div class="t" style="left:185.90px;top:523.30px;font-size:10.3px;color:#111;transform:scaleX(0.8750);transform-origin:0 0;">13.11.2025 16:30:49</div>
<div class="t" style="left:274.80px;top:523.30px;font-size:10.3px;color:#111;transform:scaleX(0.8750);transform-origin:0 0;">4349</div>
<div class="t" style="left:321.70px;top:523.30px;font-size:10.3px;color:#111;transform:scaleX(0.8750);transform-origin:0 0;">33</div>
<div class="t" style="left:379.00px;top:523.30px;font-size:10.3px;color:#111;transform:scaleX(0.8750);transform-origin:0 0;">44</div>
<div class="t" style="left:149.40px;top:541.60px;font-size:10.3px;color:#111;transform:scaleX(0.8750);transform-origin:0 0;">42771</div>
<div class="t" style="left:185.90px;top:541.60px;font-size:10.3px;color:#111;transform:scaleX(0.8750);transform-origin:0 0;">13.11.2025 16:30:49</div>
<div class="t" style="left:274.80px;top:541.60px;font-size:10.3px;color:#111;transform:scaleX(0.8750);transform-origin:0 0;">4349</div>
<div class="t" style="left:321.70px;top:541.60px;font-size:10.3px;color:#111;transform:scaleX(0.8750);transform-origin:0 0;">33</div>
<div class="t" style="left:379.00px;top:541.60px;font-size:10.3px;color:#111;transform:scaleX(0.8750);transform-origin:0 0;">44</div>
<div class="t" style="left:149.40px;top:559.89px;font-size:10.3px;color:#111;transform:scaleX(0.8750);transform-origin:0 0;">42772</div>
<div class="t" style="left:185.90px;top:559.89px;font-size:10.3px;color:#111;transform:scaleX(0.8750);transform-origin:0 0;">13.11.2025 16:30:49</div>
<div class="t" style="left:274.80px;top:559.89px;font-size:10.3px;color:#111;transform:scaleX(0.8750);transform-origin:0 0;">4349</div>
<div class="t" style="left:321.70px;top:559.89px;font-size:10.3px;color:#111;transform:scaleX(0.8750);transform-origin:0 0;">33</div>
<div class="t" style="left:379.00px;top:559.89px;font-size:10.3px;color:#111;transform:scaleX(0.8750);transform-origin:0 0;">44</div>
<div class="t" style="left:149.40px;top:578.20px;font-size:10.3px;color:#111;transform:scaleX(0.8750);transform-origin:0 0;">42773</div>
<div class="t" style="left:185.90px;top:578.20px;font-size:10.3px;color:#111;transform:scaleX(0.8750);transform-origin:0 0;">13.11.2025 16:30:50</div>
<div class="t" style="left:274.80px;top:578.20px;font-size:10.3px;color:#111;transform:scaleX(0.8750);transform-origin:0 0;">4349</div>
<div class="t" style="left:321.70px;top:578.20px;font-size:10.3px;color:#111;transform:scaleX(0.8750);transform-origin:0 0;">33</div>
<div class="t" style="left:379.00px;top:578.20px;font-size:10.3px;color:#111;transform:scaleX(0.8750);transform-origin:0 0;">44</div>
<div class="t" style="left:149.40px;top:596.50px;font-size:10.3px;color:#111;transform:scaleX(0.8750);transform-origin:0 0;">42774</div>
<div class="t" style="left:185.90px;top:596.50px;font-size:10.3px;color:#111;transform:scaleX(0.8750);transform-origin:0 0;">13.11.2025 16:30:50</div>
<div class="t" style="left:274.80px;top:596.50px;font-size:10.3px;color:#111;transform:scaleX(0.8750);transform-origin:0 0;">4349</div>
<div class="t" style="left:321.70px;top:596.50px;font-size:10.3px;color:#111;transform:scaleX(0.8750);transform-origin:0 0;">33</div>
<div class="t" style="left:379.00px;top:596.50px;font-size:10.3px;color:#111;transform:scaleX(0.8750);transform-origin:0 0;">44</div>
<div class="a" style="left:785px;top:444.8px;width:14px;height:169.7px;background:#f0f0f0"></div>
<div class="a" style="left:792.5px;top:458.7px;width:1.6px;height:14px;background:#7a7a7a"></div>
<div class="a" style="left:799px;top:444px;width:1px;height:170.5px;background:#a0a0a0"></div>
<div class="a" style="left:126px;top:614.5px;width:674px;height:3.5px;background:#6b6b6b"></div>
<div class="a" style="left:804px;top:90px;width:215px;height:412px;border:1px solid #767676;background:#ababab"></div>
<div class="a" style="left:805px;top:91px;width:213.4px;height:18.3px;background:#fff"></div>
<div class="a" style="left:805px;top:109.3px;width:20px;height:308.9px;background:#fff"></div>
<div class="a" style="left:825px;top:109.3px;width:193.4px;height:308.9px;background:#dcdcdc"></div>
<div class="a" style="left:825px;top:108.8px;width:193.4px;height:1px;background:#a0a0a0"></div>
<div class="a" style="left:805px;top:108.8px;width:20px;height:1px;background:#e2e2e2"></div>
<div class="a" style="left:825px;top:127.1px;width:193.4px;height:1px;background:#a0a0a0"></div>
<div class="a" style="left:805px;top:127.1px;width:20px;height:1px;background:#e2e2e2"></div>
<div class="a" style="left:825px;top:145.4px;width:193.4px;height:1px;background:#a0a0a0"></div>
<div class="a" style="left:805px;top:145.4px;width:20px;height:1px;background:#e2e2e2"></div>
<div class="a" style="left:825px;top:163.7px;width:193.4px;height:1px;background:#a0a0a0"></div>
<div class="a" style="left:805px;top:163.7px;width:20px;height:1px;background:#e2e2e2"></div>
<div class="a" style="left:825px;top:182.0px;width:193.4px;height:1px;background:#a0a0a0"></div>
<div class="a" style="left:805px;top:182.0px;width:20px;height:1px;background:#e2e2e2"></div>
<div class="a" style="left:825px;top:200.3px;width:193.4px;height:1px;background:#a0a0a0"></div>
<div class="a" style="left:805px;top:200.3px;width:20px;height:1px;background:#e2e2e2"></div>
<div class="a" style="left:825px;top:218.6px;width:193.4px;height:1px;background:#a0a0a0"></div>
<div class="a" style="left:805px;top:218.6px;width:20px;height:1px;background:#e2e2e2"></div>
<div class="a" style="left:825px;top:343.5px;width:193.4px;height:1px;background:#a0a0a0"></div>
<div class="a" style="left:805px;top:343.5px;width:20px;height:1px;background:#e2e2e2"></div>
<div class="a" style="left:825px;top:362.8px;width:193.4px;height:1px;background:#a0a0a0"></div>
<div class="a" style="left:805px;top:362.8px;width:20px;height:1px;background:#e2e2e2"></div>
<div class="a" style="left:825px;top:381.1px;width:193.4px;height:1px;background:#a0a0a0"></div>
<div class="a" style="left:805px;top:381.1px;width:20px;height:1px;background:#e2e2e2"></div>
<div class="a" style="left:825px;top:399.5px;width:193.4px;height:1px;background:#a0a0a0"></div>
<div class="a" style="left:805px;top:399.5px;width:20px;height:1px;background:#e2e2e2"></div>
<div class="a" style="left:805px;top:417.7px;width:213.4px;height:1px;background:#a0a0a0"></div>
<div class="a" style="left:824.5px;top:91px;width:1px;height:18.3px;background:#e0e0e0"></div>
<div class="a" style="left:824.5px;top:109.3px;width:1px;height:308.9px;background:#a0a0a0"></div>
<div class="a" style="left:891.8px;top:91px;width:1px;height:18.3px;background:#e0e0e0"></div>
<div class="a" style="left:891.8px;top:109.3px;width:1px;height:308.9px;background:#a0a0a0"></div>
<div class="t" style="left:831.50px;top:96.00px;font-size:10.3px;color:#111;transform:scaleX(0.8450);transform-origin:0 0;">Description</div>
<div class="t" style="left:898.80px;top:96.00px;font-size:10.3px;color:#111;transform:scaleX(0.8450);transform-origin:0 0;">Value</div>
<div class="a" style="left:825.5px;top:109.8px;width:66.3px;height:17.8px;background:#3399ff"></div>
<svg style="left:810px;top:113.5px" width="5" height="8" viewBox="0 0 5 8"><path d="M0 0 L5 4 L0 8Z" fill="#222"/></svg>
<div class="t" style="left:828.00px;top:114.29px;font-size:10.3px;color:#fff;transform:scaleX(0.8450);transform-origin:0 0;">Database</div>
<div class="t" style="left:828.00px;top:132.59px;font-size:10.3px;color:#111;transform:scaleX(0.8450);transform-origin:0 0;">Screen</div>
<div class="t" style="left:828.00px;top:150.90px;font-size:10.3px;color:#111;transform:scaleX(0.8450);transform-origin:0 0;">Panel</div>
<div class="t" style="left:828.00px;top:169.19px;font-size:10.3px;color:#111;transform:scaleX(0.8450);transform-origin:0 0;">Chart</div>
<div class="t" style="left:828.00px;top:187.50px;font-size:10.3px;color:#111;transform:scaleX(0.8450);transform-origin:0 0;">File</div>
<div class="t" style="left:828.00px;top:205.79px;font-size:10.3px;color:#8c8c8c;transform:scaleX(0.8450);transform-origin:0 0;">Excel Template</div>
<div class="t" style="left:828.00px;top:277.40px;font-size:10.3px;color:#8c8c8c;transform:scaleX(0.8450);transform-origin:0 0;">Logo</div>
<div class="t" style="left:828.00px;top:349.50px;font-size:10.3px;color:#8c8c8c;transform:scaleX(0.8450);transform-origin:0 0;">Header</div>
<div class="t" style="left:828.00px;top:368.30px;font-size:10.3px;color:#8c8c8c;transform:scaleX(0.8450);transform-origin:0 0;">Footer</div>
<div class="t" style="left:828.00px;top:386.65px;font-size:10.3px;color:#8c8c8c;transform:scaleX(0.8450);transform-origin:0 0;">Show On Chart</div>
<div class="t" style="left:828.00px;top:404.95px;font-size:10.3px;color:#8c8c8c;transform:scaleX(0.8450);transform-origin:0 0;">Show File</div>
<div class="t" style="left:895.50px;top:114.29px;font-size:10.3px;color:#111;transform:scaleX(0.8450);transform-origin:0 0;">Database</div>
<div class="t" style="left:895.50px;top:187.50px;font-size:10.3px;color:#111;transform:scaleX(0.8450);transform-origin:0 0;">No</div>
<div class="a" style="left:949.7px;top:385.3px;width:11.3px;height:11.3px;border:1px solid #8a8a8a;border-radius:2px;background:#ececec"></div>
<div class="a" style="left:949.7px;top:403.6px;width:11.3px;height:11.3px;border:1px solid #8a8a8a;border-radius:2px;background:#ececec"></div>
<div class="a" style="left:804px;top:506px;width:215px;height:109px;border:1px solid #767676;background:#ababab"></div>
<div class="a" style="left:805px;top:507px;width:213.4px;height:18px;background:#fff"></div>
<div class="a" style="left:805px;top:525px;width:20px;height:37.3px;background:#fff"></div>
<div class="a" style="left:825px;top:525px;width:193.4px;height:37.3px;background:#dcdcdc"></div>
<div class="a" style="left:825px;top:524.5px;width:193.4px;height:1px;background:#a0a0a0"></div>
<div class="a" style="left:805px;top:524.5px;width:20px;height:1px;background:#e2e2e2"></div>
<div class="a" style="left:825px;top:543.1px;width:193.4px;height:1px;background:#a0a0a0"></div>
<div class="a" style="left:805px;top:543.1px;width:20px;height:1px;background:#e2e2e2"></div>
<div class="a" style="left:825px;top:561.5px;width:193.4px;height:1px;background:#a0a0a0"></div>
<div class="a" style="left:805px;top:561.5px;width:20px;height:1px;background:#e2e2e2"></div>
<div class="a" style="left:824.5px;top:507px;width:1px;height:18px;background:#e0e0e0"></div>
<div class="a" style="left:824.5px;top:525px;width:1px;height:37.3px;background:#a0a0a0"></div>
<div class="a" style="left:970.8px;top:507px;width:1px;height:18px;background:#e0e0e0"></div>
<div class="a" style="left:970.8px;top:525px;width:1px;height:37.3px;background:#a0a0a0"></div>
<div class="t" style="left:831.00px;top:511.85px;font-size:10.3px;color:#111;transform:scaleX(0.8450);transform-origin:0 0;">Database</div>
<div class="t" style="left:978.00px;top:511.85px;font-size:10.3px;color:#111;transform:scaleX(0.8450);transform-origin:0 0;">Type</div>
<svg style="left:810px;top:530px" width="5" height="8" viewBox="0 0 5 8"><path d="M0 0 L5 4 L0 8Z" fill="#222"/></svg>
<div class="a" style="left:825.5px;top:526px;width:145.5px;height:17.5px;background:#fff;border:1.3px solid #3c8ee0;border-radius:2px"></div>
<div class="t" style="left:831.00px;top:530.14px;font-size:10.3px;color:#111;transform:scaleX(0.8450);transform-origin:0 0;">Connect</div>
<div class="a" style="left:122px;top:618.3px;width:899.5px;height:23px;background:#f0f0f0"></div>
<div class="a" style="left:122px;top:618.3px;width:899.5px;height:1.4px;background:#fafafa"></div>
<div class="a" style="left:3px;top:619.8px;width:74px;height:1.2px;background:#7a7a7a"></div>
<div class="a" style="left:3px;top:621px;width:74px;height:20.3px;background:#f6f6f6"></div>
<svg style="left:11px;top:626.5px" width="12" height="10.5" viewBox="0 0 12 10.5"><rect x="0.5" y="0.5" width="11" height="9.5" fill="#2a2a2a" stroke="#8a8a8a" stroke-width="1"/><rect x="1.5" y="1.5" width="9" height="7.5" fill="#f0f0f0"/><path d="M3 2 V5 M5.5 3 V5.5 M8.5 2 V4.5" stroke="#222" stroke-width="1.2"/><path d="M2 8.5 L5 6 L7 7 L10.5 4" fill="none" stroke="#2a9ae8" stroke-width="1.3"/></svg>
<div class="t" style="left:32.00px;top:627.99px;font-size:10.6px;color:#111;transform:scaleX(0.8271);transform-origin:0 0;">[0] Report</div>

</body></html>
